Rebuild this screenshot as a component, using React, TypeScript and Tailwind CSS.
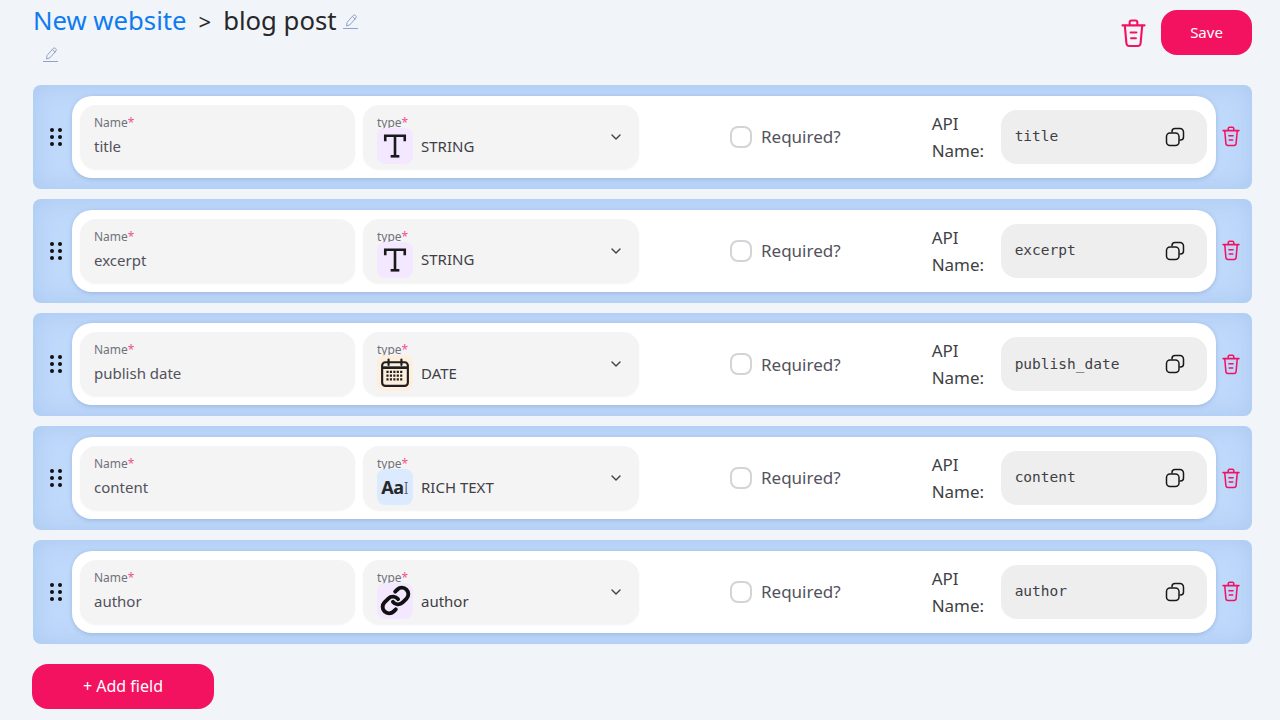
import { ChevronDown, Link } from "lucide-react";

const fields = [
  { name: "title", type: "STRING", icon: "string", api: "title" },
  { name: "excerpt", type: "STRING", icon: "string", api: "excerpt" },
  { name: "publish date", type: "DATE", icon: "date", api: "publish_date" },
  { name: "content", type: "RICH TEXT", icon: "rich", api: "content" },
  { name: "author", type: "author", icon: "link", api: "author" },
];

function TrashIcon({ className }: { className: string }) {
  return (
    <svg viewBox="0 0 26 30" fill="none" stroke="currentColor" strokeWidth="2.2" strokeLinecap="round" strokeLinejoin="round" className={className}>
      <path d="M1.500 6.500h23" />
      <path d="M9 6V3.500a2 2 0 0 1 2-2h4a2 2 0 0 1 2 2V6" />
      <path d="M4 7l1.600 18a3 3 0 0 0 3 3h8.800a3 3 0 0 0 3-3L22 7" />
      <path d="M10 14h6M10.500 20h5" />
    </svg>
  );
}

function EditIcon({ className }: { className: string }) {
  return (
    <svg viewBox="0 0 15 16" fill="none" stroke="#8fa3c8" strokeWidth="1" strokeLinejoin="round" className={`h-4 w-[15px] ${className}`}>
      <path d="M3.500 13l.6-3.600L10 2.600a1.800 1.800 0 0 1 2.500-.2l.2.2a1.800 1.800 0 0 1 .1 2.500L6.900 11.800z" />
      <path d="M9.300 3.500l3 2.800" />
      <path d="M0 15.500h15" />
    </svg>
  );
}

function CopyIcon() {
  return (
    <svg viewBox="0 0 20 20" fill="none" stroke="#18181b" strokeWidth="1.500" className="h-5 w-5">
      <path d="M7 5.500V4.500a3 3 0 0 1 3-3h5a3.500 3.500 0 0 1 3.500 3.500v5a3 3 0 0 1-3 3h-1" />
      <rect x="1.500" y="6" width="12.500" height="12.500" rx="3.500" />
    </svg>
  );
}

function TypeIcon({ icon }: { icon: string }) {
  if (icon === "date") {
    return (
      <span className="flex h-9 w-9 items-center justify-center rounded-lg bg-[#fdeedd]">
        <svg viewBox="0 0 28 28" fill="none" stroke="#1f1f1f" className="h-[30px] w-[30px]">
          <rect x="2" y="4" width="24" height="22" rx="3" strokeWidth="2" />
          <path d="M2 9h24" strokeWidth="2.500" />
          <path d="M8 1.500v5M20 1.500v5" strokeWidth="2" strokeLinecap="round" />
          <path d="M6 13h16M6 16.500h16M6 20h16" strokeWidth="2" strokeDasharray="2 1.200" />
        </svg>
      </span>
    );
  }
  if (icon === "rich") {
    return (
      <span className="flex h-9 w-9 items-center justify-center rounded-lg bg-[#dbeafe] text-[#27272a]">
        <span className="text-[18px] leading-none font-bold tracking-tight">Aa</span>
        <span className="text-[17px] leading-none font-light text-[#52525b]">I</span>
      </span>
    );
  }
  if (icon === "link") {
    return (
      <span className="flex h-9 w-9 items-center justify-center rounded-lg bg-[#f3e8ff] text-[#111]">
        <Link size={31} strokeWidth={3} />
      </span>
    );
  }
  return (
    <span className="flex h-9 w-9 items-center justify-center rounded-lg bg-[#f3e8ff]">
      <svg viewBox="0 0 24 24" fill="none" stroke="#1a1a1a" strokeWidth="2.400" strokeLinejoin="miter" className="h-[26px] w-[26px]">
        <path d="M3 7.500V2.500h18v5" />
        <path d="M12 2.500v19" />
        <path d="M8 21.500h8" />
      </svg>
    </span>
  );
}

function FieldRow({ field }: { field: (typeof fields)[number] }) {
  return (
    <div className="flex h-[103.75px] items-center rounded-lg bg-[#bfd9fb] shadow-[inset_0_0_24px_rgba(100,140,200,0.22)]">
      <div className="flex w-[39px] justify-center pl-[6px]">
        <div className="grid grid-cols-2 gap-x-[4px] gap-y-[3px]">
          {[0, 1, 2, 3, 4, 5].map((i) => (
            <span key={i} className="h-[4px] w-[4px] rounded-full bg-[#111]" />
          ))}
        </div>
      </div>
      <div className="flex h-[82px] w-[1144px] items-center rounded-[20px] bg-white pl-2 pr-[9px] shadow-[0_1px_4px_rgba(60,90,140,0.25)]">
        <div className="flex h-16 w-[275px] flex-col rounded-2xl bg-[#f4f4f5] pl-[14px] shadow-[0_1px_2px_rgba(0,0,0,0.05)]">
          <span className="mt-[10px] text-xs leading-[16px] text-[#71717a]">
            Name<span className="text-[#f5518c]">*</span>
          </span>
          <span className="mt-[5px] text-[15px] leading-[20px] text-[#52525b]">{field.name}</span>
        </div>
        <div className="relative ml-2 flex h-16 w-[276px] flex-col rounded-2xl bg-[#f4f4f5] pl-[14px] shadow-[0_1px_2px_rgba(0,0,0,0.05)]">
          <span className="mt-[10px] text-xs leading-[16px] text-[#71717a]">
            type<span className="text-[#f5518c]">*</span>
          </span>
          <div className="-mt-[3px] flex items-center gap-2">
            <TypeIcon icon={field.icon} />
            <span className="text-[15px] text-[#3f3f46]">{field.type}</span>
          </div>
          <ChevronDown size={16} strokeWidth={2} className="absolute top-6 right-[15px] text-[#3f3f46]" />
        </div>
        <div className="ml-[91px] flex items-center gap-[9px]">
          <span className="h-[22px] w-[22px] rounded-lg border-2 border-[#d4d4d8]" />
          <span className="text-[17px] text-[#52525b]">Required?</span>
        </div>
        <span className="ml-[91px] w-[69px] text-[17px] leading-[27px] text-[#3f3f46]">
          API
          <br />
          Name:
        </span>
        <div className="flex h-[54px] w-[206px] items-center justify-between rounded-2xl bg-[#eeeeee] pl-[14px] pr-[22px]">
          <span className="font-['DejaVu_Sans_Mono',monospace] text-[14.500px] text-[#3f3f46]">{field.api}</span>
          <CopyIcon />
        </div>
      </div>
      <TrashIcon className="ml-[6px] h-[21px] w-[18px] text-[#f31260]" />
    </div>
  );
}

export default function App() {
  return (
    <div className="h-[720px] overflow-hidden bg-[#f1f5fa] pl-[33px] pr-[28px] font-['Noto_Sans',sans-serif]">
      <header className="flex h-[85px] justify-between">
        <div>
          <div className="flex h-[42px] items-center text-[25.700px] text-[#27272a]">
            <span className="text-[#0f7bf0]">New website</span>
            <span className="ml-3 text-[22px]">&gt;</span>
            <span className="ml-3">blog post</span>
            <EditIcon className="ml-[6px]" />
          </div>
          <EditIcon className="mt-1 ml-[10px]" />
        </div>
        <div className="flex items-start pt-[10px]">
          <TrashIcon className="mt-[9px] h-[29px] w-[25px] text-[#f31260]" />
          <button className="ml-[15px] h-[45px] w-[91px] rounded-2xl bg-[#f31260] text-[15px] text-white">Save</button>
        </div>
      </header>
      <div className="flex w-[1219px] flex-col gap-[10px]">
        {fields.map((field) => (
          <FieldRow key={field.api} field={field} />
        ))}
      </div>
      <button className="mt-5 -ml-px h-[45px] w-[182px] rounded-2xl bg-[#f31260] text-base text-white">+ Add field</button>
    </div>
  );
}
